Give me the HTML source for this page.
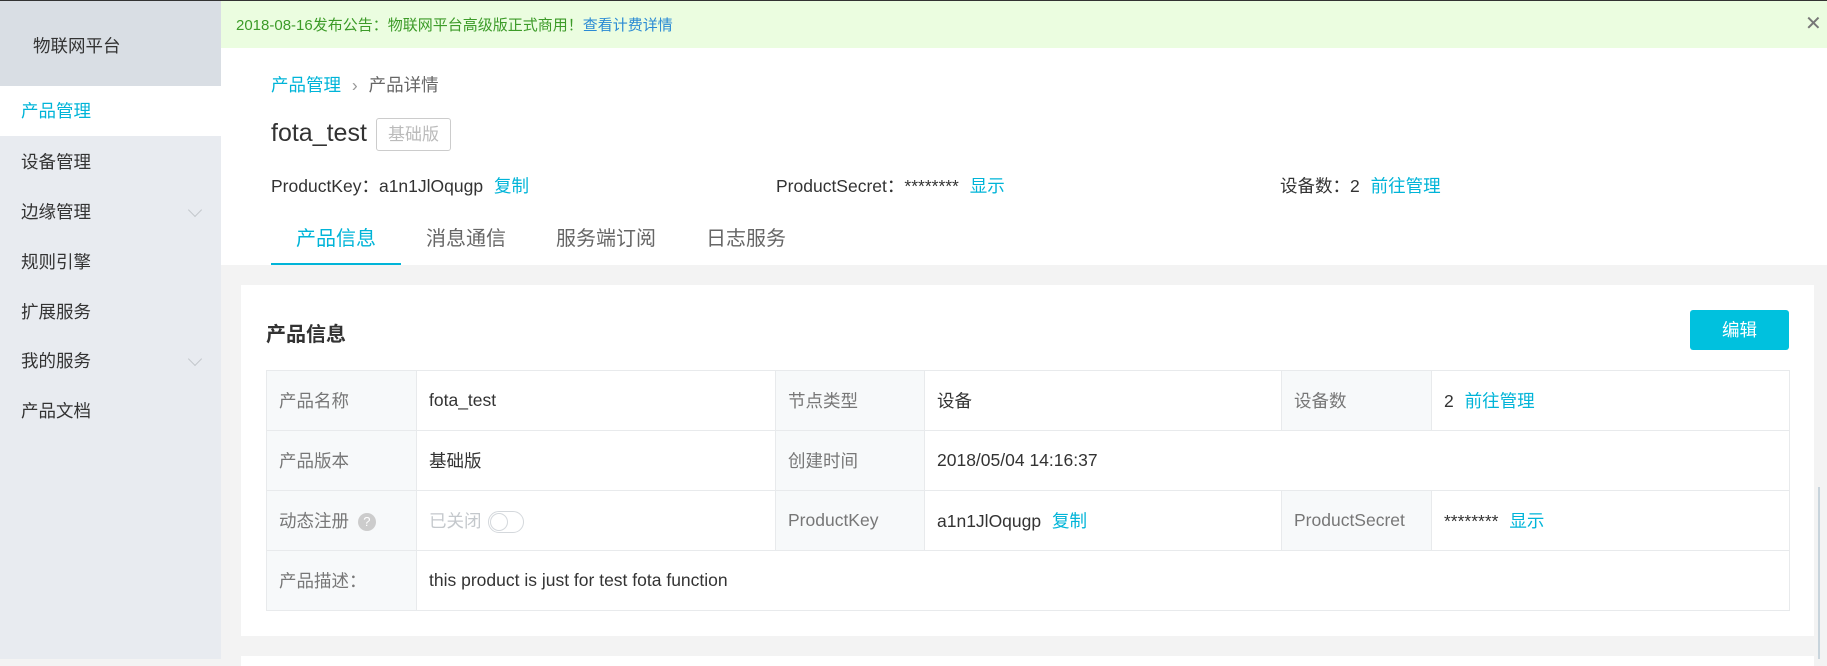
<!DOCTYPE html>
<html><head><meta charset="utf-8"><style>
*{margin:0;padding:0;box-sizing:border-box}
body{width:1827px;height:659px;overflow:hidden;position:relative;background:#f3f3f3;font-family:"Liberation Sans","Noto Sans CJK SC",sans-serif;color:#333}
.abs{position:absolute;white-space:nowrap}
.cy{color:#00b4d8}
#topline{position:absolute;left:0;top:0;width:1827px;height:1px;background:#333}
#side{position:absolute;left:0;top:1px;width:221px;height:658px;background:#e8ebf0}
#sidehead{position:absolute;left:0;top:0;width:221px;height:85px;background:#d9dee4}
.nav{position:absolute;left:0;width:221px;height:50px;line-height:50px;padding-left:21px;font-size:17.5px;color:#333}
.chev{position:absolute;left:190px;top:18px;width:10px;height:10px;border-right:1.2px solid #c4c8cc;border-bottom:1.2px solid #c4c8cc;transform:rotate(45deg)}
#notice{position:absolute;left:221px;top:1px;width:1606px;height:47px;background:#ebfde0}
#head{position:absolute;left:221px;top:48px;width:1606px;height:217px;background:#fff}
.tab{position:absolute;top:222px;font-size:20px;color:#666}
#card{position:absolute;left:241px;top:285px;width:1573px;height:351px;background:#fff}
#card2{position:absolute;left:241px;top:656px;width:1573px;height:10px;background:#fff}
table{position:absolute;left:266px;top:370px;width:1524px;border-collapse:collapse;font-size:17.5px}
td{height:60px;border:1px solid #e8eaec;padding-left:12px;color:#333;white-space:nowrap}
td.l{background:#f7f9fa;color:#777}
</style></head><body>
<div id="topline"></div>
<div id="side">
<div id="sidehead"><div class="abs" style="left:33px;top:32px;font-size:17.5px;color:#333">物联网平台</div></div>
<div class="nav" style="top:85px;background:#fff;color:#00b4d8">产品管理</div>
<div class="nav" style="top:136px">设备管理</div>
<div class="nav" style="top:186px">边缘管理<span class="chev"></span></div>
<div class="nav" style="top:236px">规则引擎</div>
<div class="nav" style="top:286px">扩展服务</div>
<div class="nav" style="top:335px">我的服务<span class="chev"></span></div>
<div class="nav" style="top:385px">产品文档</div>
</div>
<div id="notice">
<div class="abs" style="left:15px;top:13px;font-size:15px;color:#3c9b28">2018-08-16发布公告：物联网平台高级版正式商用！<span style="color:#2a8ad4">查看计费详情</span></div>
<div class="abs" style="left:1584px;top:10px;font-size:20px;color:#777;font-weight:300">✕</div>
</div>
<div id="head"></div>
<div class="abs" style="left:271px;top:72px;font-size:17.5px;color:#666"><span class="cy">产品管理</span> <span style="color:#999;margin:0 6px">›</span> 产品详情</div>
<div class="abs" style="left:271px;top:119px;font-size:25px;color:#333">fota_test</div>
<div class="abs" style="left:376px;top:118px;width:75px;height:33px;border:1px solid #ccc;border-radius:3px;font-size:17px;color:#bbb;text-align:center;line-height:31px">基础版</div>
<div class="abs" style="left:271px;top:173px;font-size:17.5px">ProductKey：a1n1JlOqugp <span class="cy" style="margin-left:6px">复制</span></div>
<div class="abs" style="left:776px;top:173px;font-size:17.5px">ProductSecret：******** <span class="cy" style="margin-left:6px">显示</span></div>
<div class="abs" style="left:1280px;top:173px;font-size:17.5px">设备数：2 <span class="cy" style="margin-left:6px">前往管理</span></div>
<div class="tab" style="left:296px;color:#00b4d8">产品信息</div>
<div class="tab" style="left:426px">消息通信</div>
<div class="tab" style="left:556px">服务端订阅</div>
<div class="tab" style="left:706px">日志服务</div>
<div class="abs" style="left:271px;top:263px;width:130px;height:2px;background:#00b4d8"></div>
<div id="card"></div>
<div id="card2"></div>
<div class="abs" style="left:266px;top:318px;font-size:20px;font-weight:bold;color:#333">产品信息</div>
<div class="abs" style="left:1690px;top:310px;width:99px;height:40px;background:#00c1de;border-radius:3px;color:#fff;font-size:17.5px;text-align:center;line-height:40px">编辑</div>
<table>
<tr><td class="l" style="width:150px">产品名称</td><td style="width:359px">fota_test</td><td class="l" style="width:149px">节点类型</td><td style="width:357px">设备</td><td class="l" style="width:150px">设备数</td><td>2 <span class="cy" style="margin-left:6px">前往管理</span></td></tr>
<tr><td class="l">产品版本</td><td>基础版</td><td class="l">创建时间</td><td colspan="3">2018/05/04 14:16:37</td></tr>
<tr><td class="l">动态注册 <span style="display:inline-block;width:18px;height:18px;border-radius:50%;background:#ccc;color:#fff;font-size:13px;text-align:center;line-height:18px;margin-left:4px;vertical-align:middle">?</span></td><td style="color:#c4c8cc">已关闭 <span style="display:inline-block;width:36px;height:22px;border:1px solid #d4d8dc;border-radius:11px;vertical-align:middle;position:relative;margin-left:2px"><span style="position:absolute;left:1px;top:1px;width:18px;height:18px;border-radius:50%;border:1px solid #d4d8dc;background:#fff"></span></span></td><td class="l">ProductKey</td><td>a1n1JlOqugp <span class="cy" style="margin-left:6px">复制</span></td><td class="l">ProductSecret</td><td>******** <span class="cy" style="margin-left:6px">显示</span></td></tr>
<tr><td class="l">产品描述：</td><td colspan="5">this product is just for test fota function</td></tr>
</table>
<div class="abs" style="left:1818px;top:487px;width:2px;height:172px;background:#c8d4dc"></div>
</body></html>
